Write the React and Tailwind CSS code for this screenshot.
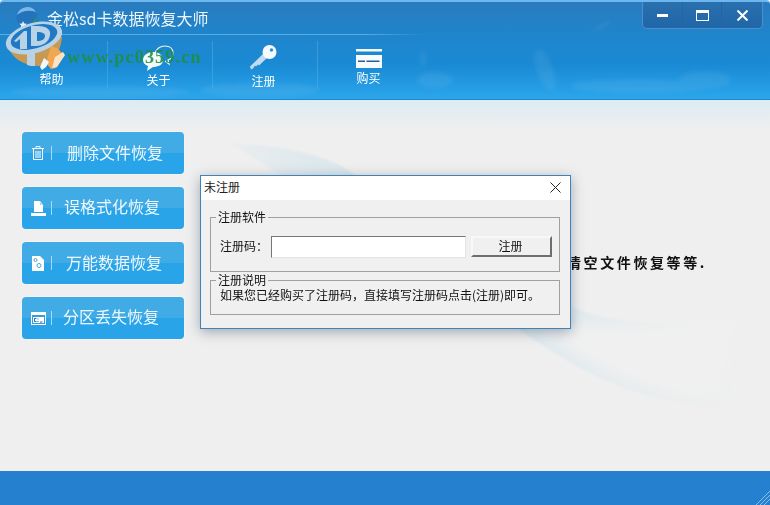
import React from "react";

const cjk = { fontFamily: '"Noto Sans CJK SC", sans-serif' };

const Logo = () => (
  <svg className="absolute left-0 top-0" width="70" height="72" viewBox="0 0 70 72">
    {/* globe */}
    <circle cx="27" cy="18" r="10.500" fill="#2474bd" />
    <path d="M17 15a10.500 10.500 0 0 1 19-3c-6-2-13-2-19 3z" fill="#7db8e4" />
    <path d="M21 27c7 1 13-4 15-11 2 6-1 11-6 12-4 1-6 0-9-1z" fill="#2e8f6a" />
    <path d="M23 21l1.200 2.500 2.800.3-2 1.800.6 2.600-2.600-1.400-2.400 1.400.6-2.600-2-1.800 2.800-.3z" fill="#e6f2fa" />
    {/* disc rim */}
    <path d="M7 42C8 55 22 66 38 66 50 66 60 56 62 37L7 40z" fill="#c69a55" />
    <path d="M27 52h8v14c-3 0-5 0-8-1z" fill="#b9d2e4" />
    {/* disc */}
    <ellipse cx="34" cy="38" rx="29" ry="15" transform="rotate(-16 34 38)" fill="#b8d2e6" />
    <ellipse cx="34" cy="37" rx="24" ry="11.500" transform="rotate(-16 34 37)" fill="#1f79c5" />
    <path d="M14 41l10-10h3v18h-7V39l-4 3z" fill="#b8d2e6" />
    <path d="M31 26h7c9 0 13 4 12 9-1 7-7 11-14 11h-5zM37 32v9c5 0 8-2 8-5s-3-4-8-4z" fill="#b8d2e6" />
    {/* pen */}
    <path d="M51 46l6 2 7 7-8 13-5 1-5-6z" fill="#f1a651" />
    <path d="M55 57l8-5 2 3-8 12-5 1z" fill="#fbe3c4" />
    <path d="M44 58l5 4-3 5-4 3-2-3z" fill="#f4f8fb" />
  </svg>
);

const ChatIcon = () => (
  <svg width="31" height="26" viewBox="0 0 31 26">
    <path d="M12 8c2-5 6-7 10-7 5 0 8 3 8 7s-2 6-5 7l1 4-4-3" fill="none" stroke="#eaf6ef" strokeWidth="1.200" />
    <path d="M0 15c0-5 5-8 10-8 6 0 10 3 10 8s-5 7-10 7l-6 4 1-5c-3-1-5-3-5-6z" fill="#f4faf8" />
  </svg>
);

const KeyIcon = () => (
  <svg width="27" height="25" viewBox="0 0 27 25">
    <path d="M0 21.500L14 8l4 4L9 20.500l-1-1-2 2-1-1-2 3-2 1z" fill="#c3dbee" />
    <circle cx="19.500" cy="7" r="7" fill="#f5fafd" />
    <circle cx="21.500" cy="5" r="1.700" fill="#2b8fd6" />
  </svg>
);

const CardIcon = () => (
  <svg width="26" height="19" viewBox="0 0 26 19">
    <rect x="0" y="0" width="26" height="2.500" fill="#f7fbfe" />
    <rect x="0" y="6" width="26" height="13" fill="#f7fbfe" />
    <rect x="2" y="11.500" width="7" height="1.500" fill="#2a5d93" />
    <rect x="10.500" y="11.500" width="13" height="1.500" fill="#2a5d93" />
  </svg>
);

const TrashIcon = () => (
  <svg width="12" height="14" viewBox="0 0 12 14" fill="none" stroke="#ffffff">
    <path d="M0 2.500h12" />
    <path d="M4 2V.5h4V2" />
    <path d="M1.500 3v10.500h9V3M4 5v7M6 5v7M8 5v7" />
  </svg>
);

const FormatIcon = () => (
  <svg width="15" height="15" viewBox="0 0 15 15" fill="#ffffff">
    <path d="M3 0h6l3 4v7H3z" />
    <path d="M0 12h15v3H0z" />
    <path d="M9 1l2 3H9z" fill="#8fd0f4" />
  </svg>
);

const FileGearIcon = () => (
  <svg width="12" height="15" viewBox="0 0 12 15">
    <path d="M0 0h8l4 4v11H0z" fill="#ffffff" />
    <circle cx="3.500" cy="4" r="1.500" fill="none" stroke="#4a9fd8" />
    <circle cx="7" cy="9.500" r="2" fill="none" stroke="#4a9fd8" />
  </svg>
);

const DriveIcon = () => (
  <svg width="15" height="13" viewBox="0 0 15 13">
    <path d="M0 0h15v13H0z" fill="#ffffff" />
    <path d="M1 3h13v9H1z" fill="#2f9fe2" />
    <path d="M2 5h11v6H2z" fill="#ffffff" />
    <path d="M3.500 6.500h2M3.500 9.500h2M3.500 6.500v3M7 6.500v1M7 9v1M9 10h2.500" stroke="#2a6f9f" fill="none" />
  </svg>
);

const Swoosh = () => (
  <svg className="absolute inset-0" width="770" height="371" viewBox="0 0 770 371">
    <defs>
      <linearGradient id="swooshTint" x1="0" x2="1" y1="0" y2="0">
        <stop offset="0" stopColor="#e9edef" />
        <stop offset="0.3" stopColor="#d6e5eb" />
        <stop offset="0.65" stopColor="#e1eaee" />
        <stop offset="1" stopColor="#efefef" />
      </linearGradient>
      <filter id="swooshSoft"><feGaussianBlur stdDeviation="1" /></filter>
      <filter id="swooshBody"><feGaussianBlur stdDeviation="7" /></filter>
    </defs>
    <path
      d="M230 43C280 45 330 55 355 75 420 130 500 195 573 208 620 225 700 235 747 197 745 250 735 295 720 306 650 305 590 280 520 230 440 170 320 100 230 43Z"
      fill="url(#swooshTint)"
      filter="url(#swooshSoft)"
    />
    <path
      d="M290 80C340 95 400 150 470 190 530 225 620 240 740 210 730 270 725 295 710 300 650 295 590 270 530 222 450 165 360 115 290 80Z"
      fill="#f0f0f0"
      filter="url(#swooshBody)"
    />
  </svg>
);

const ToolItem = ({ label, children, border, className = "", iconClass = "", labelClass = "" }) => (
  <div className={`flex h-[48px] w-[105px] flex-col items-center ${border ? "border-l border-[#5aaee2]/50" : ""} ${className}`}>
    <div className={`flex flex-1 justify-center ${iconClass}`}>{children}</div>
    <span className={`text-xs leading-4 text-white ${labelClass}`}>{label}</span>
  </div>
);

const SideButton = ({ icon, label, pad }) => (
  <button className="flex h-[42px] w-[162px] items-center rounded-sm bg-[linear-gradient(#41abe6_0%,#41abe6_50%,#2aa4e9_50%,#2aa4e9_100%)] shadow-[0_0_2px_rgba(255,255,255,0.9)]">
    <span className="flex w-[29px] justify-end pr-[5px]"><span className="flex w-[16px] justify-center">{icon}</span></span>
    <span className="h-[14px] w-px bg-[#a8daf6]" />
    <span className={`text-base leading-none text-[#eef9ff] ${pad}`}>{label}</span>
  </button>
);

const GroupBox = ({ title, className, children }) => (
  <div className={`relative ml-[9px] mr-[10px] border border-[#a0a0a0] ${className}`}>
    <span className="absolute left-[5px] top-[-7px] bg-[#f0f0f0] px-[2px] text-xs leading-3 text-[#111]">{title}</span>
    {children}
  </div>
);

const RegisterDialog = () => (
  <div className="absolute left-[200px] top-[175px] h-[154px] w-[371px] border border-[#3f83b9] bg-[#f0f0f0] shadow-[0_3px_12px_rgba(40,60,80,0.4)]">
    <div className="flex h-[24px] items-center justify-between bg-white pl-[3px] pr-[9px]">
      <span className="mt-[-3px] text-xs text-[#222]">未注册</span>
      <svg className="mt-[-2px]" width="11" height="11" viewBox="0 0 11 11" stroke="#222" fill="none">
        <path d="M.5.500l10 10M10.500.500l-10 10" />
      </svg>
    </div>
    <GroupBox title="注册软件" className="mt-[17px] h-[55px]">
      <div className="flex items-center pl-[9px] pt-[18px]">
        <span className="mt-[-2px] w-[51px] text-xs leading-none text-[#111]">注册码：</span>
        <div className="h-[22px] w-[195px] border border-t-[#777] border-l-[#777] border-r-[#e3e3e3] border-b-[#e3e3e3] bg-white" />
        <div className="ml-[5px] mt-[-2px] flex h-[21px] w-[81px] items-center justify-center border-2 border-t-[#f8f8f8] border-l-[#f8f8f8] border-r-[#6e6e6e] border-b-[#6e6e6e] bg-[#f0f0f0] pr-[2px] text-xs text-[#111]">注册</div>
      </div>
    </GroupBox>
    <GroupBox title="注册说明" className="mt-[8px] h-[35px]">
      <p className="whitespace-nowrap pl-[9px] pt-[8px] text-xs leading-3 text-[#111]">如果您已经购买了注册码，直接填写注册码点击(注册)即可。</p>
    </GroupBox>
  </div>
);

export default function App() {
  return (
    <div className="relative flex h-[505px] w-[770px] flex-col overflow-hidden bg-[#efefef]" style={cjk}>
      <header className="relative h-[100px] shrink-0 overflow-hidden rounded-t-[4px] border-t-2 border-b border-t-[#6cb7ee] border-b-[#2487c8] bg-[linear-gradient(#2a7bbe_0%,#1f85cc_35%,#1a8ad4_65%,#2ba6ec_100%)]">
        {/* faint foliage in the header */}
        <svg className="absolute inset-0 blur-[2px]" width="770" height="100" viewBox="0 0 770 100">
          <g fill="#ffffff" opacity="0.07">
            <ellipse cx="100" cy="90" rx="90" ry="6" />
            <ellipse cx="260" cy="88" rx="60" ry="7" />
            <ellipse cx="435" cy="78" rx="18" ry="8" />
            <ellipse cx="545" cy="68" rx="8" ry="22" transform="rotate(-20 545 68)" />
            <ellipse cx="640" cy="84" rx="70" ry="7" />
            <ellipse cx="705" cy="78" rx="26" ry="9" />
            <ellipse cx="423" cy="57" rx="3" ry="8" />
            <path d="M590 30c8-6 14-10 22-12-4 5-10 10-22 12z" />
          </g>
        </svg>
        <div className="absolute left-0 top-[32px] h-px w-[428px] bg-[linear-gradient(90deg,#58ace4,#58ace4_85%,transparent)]" />

        <div className="relative flex h-[32px] items-start justify-between">
          <h1 className="pl-[47px] pt-[5px] text-base font-normal leading-[22px] text-[#eef7fd]">金松sd卡数据恢复大师</h1>
          <div className="mr-[7px] flex h-[27px] w-[121px] items-center rounded-b-[5px] border border-t-0 border-[#4a90cc] bg-[linear-gradient(#2a6fae,#2067a8)]">
            <div className="flex h-full w-[40px] items-center justify-center border-r border-[#2a62a0]">
              <span className="h-[3px] w-[11px] bg-white" />
            </div>
            <div className="flex h-full w-[40px] items-center justify-center border-r border-[#2a62a0]">
              <span className="h-[11px] w-[13px] border border-t-[3px] border-white" />
            </div>
            <div className="flex h-full w-[40px] items-center justify-center">
              <svg width="11" height="11" viewBox="0 0 11 11" stroke="#ffffff" strokeWidth="2" fill="none">
                <path d="M.5.500l10 10M10.500.500l-10 10" />
              </svg>
            </div>
          </div>
        </div>

        <div className="relative mt-[7px] flex">
          <ToolItem label="帮助" className="w-[107px] pr-[4px]" labelClass="mb-[2px]"><span /></ToolItem>
          <ToolItem label="关于" border className="pr-[3px]" iconClass="pt-[4px]" labelClass="mb-[1px]"><ChatIcon /></ToolItem>
          <ToolItem label="注册" border className="pr-[3px]" iconClass="pt-[4px]"><KeyIcon /></ToolItem>
          <ToolItem label="购买" border className="pr-[3px]" iconClass="pt-[8px]" labelClass="mb-[3px]"><CardIcon /></ToolItem>
        </div>
      </header>

      <main className="relative flex flex-1 bg-[linear-gradient(#dcebf3_0%,#efefef_8%,#efefef_100%)]">
        <Swoosh />

        <nav className="relative flex flex-col gap-[13px] pl-[22px] pt-[32px]">
          <SideButton icon={<TrashIcon />} label="删除文件恢复" pad="pb-[3px] pl-[15px]" />
          <SideButton icon={<FormatIcon />} label="误格式化恢复" pad="pb-[5px] pl-[12px]" />
          <SideButton icon={<FileGearIcon />} label="万能数据恢复" pad="pb-[3px] pl-[14px]" />
          <SideButton icon={<DriveIcon />} label="分区丢失恢复" pad="pb-[5px] pl-[11px]" />
        </nav>

        <p className="relative ml-[383px] mt-[153px] h-fit whitespace-nowrap text-sm font-bold leading-[18px] tracking-[2.600px] text-[#111]">清空文件恢复等等.</p>
      </main>

      <footer className="relative h-[34px] shrink-0 bg-[#2581cf]">
        <svg className="absolute bottom-0 right-0" width="15" height="15" viewBox="0 0 15 15" stroke="#8cc0e8" fill="none">
          <path d="M15 1L1 15M15 5L5 15M15 9l-6 6" />
        </svg>
      </footer>

      {/* watermark logo on top of the header */}
      <Logo />
      <span className="absolute left-[67px] top-[45px] whitespace-nowrap text-[18px] font-bold leading-6 tracking-[1.200px] text-[#1f8f45] opacity-90" style={{ fontFamily: '"Liberation Serif", serif' }}>www.pc0359.cn</span>

      <RegisterDialog />
    </div>
  );
}
